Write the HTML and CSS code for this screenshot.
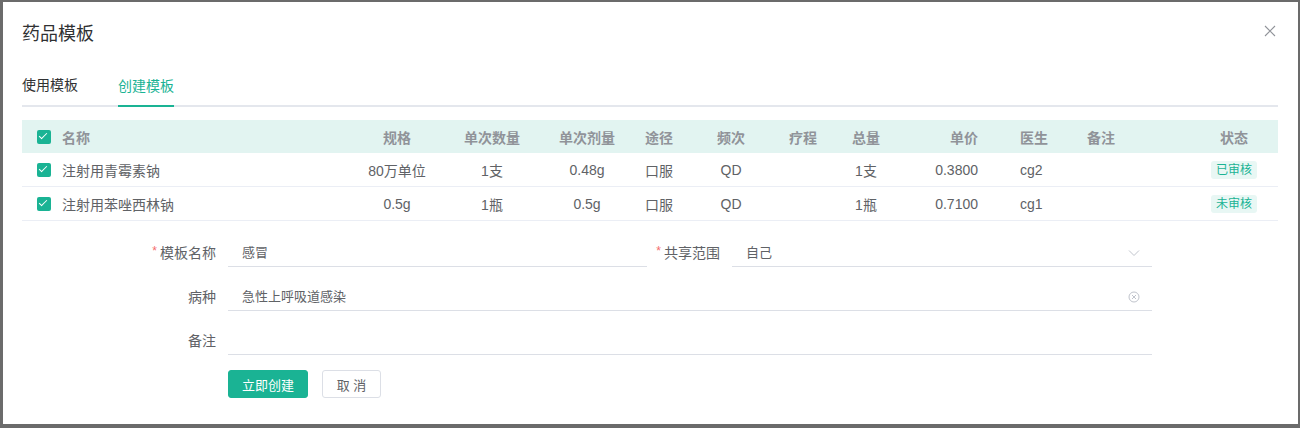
FILE: index.html
```html
<!DOCTYPE html>
<html lang="zh">
<head>
<meta charset="utf-8">
<title>药品模板</title>
<link rel="stylesheet" href="styles.css">
</head>
<body>
<div class="modal">
  <div class="modal-head">
    <span class="modal-title">药品模板</span>
    <svg class="close" width="12" height="12" viewBox="0 0 12 12"><path d="M1 1L11 11M11 1L1 11" stroke="#909399" stroke-width="1.1" fill="none"/></svg>
  </div>
  <div class="tabs">
    <div class="tab">使用模板</div>
    <div class="tab active">创建模板</div>
  </div>
  <div class="grid">
    <div class="row head">
      <div class="c-chk"><span class="chk"></span></div>
      <div class="c-left">名称</div>
      <div class="c-mid">规格</div>
      <div class="c-mid">单次数量</div>
      <div class="c-mid">单次剂量</div>
      <div class="c-mid">途径</div>
      <div class="c-mid">频次</div>
      <div class="c-mid">疗程</div>
      <div class="c-mid">总量</div>
      <div class="c-right">单价</div>
      <div class="c-doc">医生</div>
      <div class="c-doc">备注</div>
      <div class="c-mid">状态</div>
    </div>
    <div class="row">
      <div class="c-chk"><span class="chk"></span></div>
      <div class="c-left">注射用青霉素钠</div>
      <div class="c-mid">80万单位</div>
      <div class="c-mid">1支</div>
      <div class="c-mid">0.48g</div>
      <div class="c-mid">口服</div>
      <div class="c-mid">QD</div>
      <div class="c-mid"></div>
      <div class="c-mid">1支</div>
      <div class="c-right">0.3800</div>
      <div class="c-doc">cg2</div>
      <div class="c-doc"></div>
      <div class="c-mid"><span class="tag">已审核</span></div>
    </div>
    <div class="row">
      <div class="c-chk"><span class="chk"></span></div>
      <div class="c-left">注射用苯唑西林钠</div>
      <div class="c-mid">0.5g</div>
      <div class="c-mid">1瓶</div>
      <div class="c-mid">0.5g</div>
      <div class="c-mid">口服</div>
      <div class="c-mid">QD</div>
      <div class="c-mid"></div>
      <div class="c-mid">1瓶</div>
      <div class="c-right">0.7100</div>
      <div class="c-doc">cg1</div>
      <div class="c-doc"></div>
      <div class="c-mid"><span class="tag">未审核</span></div>
    </div>
  </div>
  <div class="form">
    <div class="frow">
      <label class="flabel"><span class="req">*</span>模板名称</label>
      <div class="finput half"><span class="val">感冒</span></div>
      <label class="flabel lab2"><span class="req">*</span>共享范围</label>
      <div class="finput half2"><span class="val">自己</span>
        <svg class="suffix" width="12" height="8" viewBox="0 0 12 8"><path d="M1 1.5L6 6.5L11 1.5" stroke="#c0c4cc" stroke-width="1" fill="none"/></svg>
      </div>
    </div>
    <div class="frow">
      <label class="flabel">病种</label>
      <div class="finput full"><span class="val">急性上呼吸道感染</span>
        <svg class="suffix" width="12" height="12" viewBox="0 0 12 12"><circle cx="6" cy="6" r="5" stroke="#c0c4cc" stroke-width="1" fill="none"/><path d="M4 4L8 8M8 4L4 8" stroke="#c0c4cc" stroke-width="1"/></svg>
      </div>
    </div>
    <div class="frow">
      <label class="flabel">备注</label>
      <div class="finput full"></div>
    </div>
    <div class="btns">
      <button class="btn primary">立即创建</button>
      <button class="btn">取 消</button>
    </div>
  </div>
</div>
</body>
</html>
```

FILE: styles.css
```css
html, body {
  margin: 0;
  padding: 0;
  background: #6b6b6b;
  height: 428px;
  overflow: hidden;
}
body {
  font-family: "Liberation Sans", "Noto Sans CJK SC", sans-serif;
  color: #606266;
}
.modal {
  margin: 2px 2px 0 3px;
  height: 422px;
  background: #fff;
  box-sizing: border-box;
  padding: 20px 20px 0 19px;
}
.modal-head {
  display: flex;
  align-items: center;
  justify-content: space-between;
  height: 24px;
}
.modal-title {
  font-size: 18px;
  color: #303133;
  line-height: 24px;
}
.close {
  margin-right: 2px;
  margin-top: -6px;
}
.tabs {
  margin-top: 19px;
  display: flex;
  gap: 40px;
  height: 40px;
  border-bottom: 2px solid #e4e7ed;
}
.tab {
  font-size: 14px;
  line-height: 40px;
  color: #303133;
  height: 40px;
  box-sizing: border-box;
}
.tab.active {
  color: #1ab394;
  border-bottom: 2px solid #1ab394;
  height: 42px;
  line-height: 42px;
  padding-bottom: 4px;
}
.grid {
  margin-top: 13px;
  font-size: 14px;
}
.row {
  display: grid;
  grid-template-columns: 40px 288px 94px 96px 94px 50px 94px 50px 76px 106px 67px 113px 88px;
  height: 34px;
  align-items: center;
  border-bottom: 1px solid #ebeef5;
  box-sizing: border-box;
}
.row.head {
  height: 33px;
  background: #e2f4f1;
  color: #909399;
  font-weight: bold;
  border-bottom: none;
}
.c-chk {
  padding-left: 15px;
  display: flex;
  align-items: center;
}
.chk {
  width: 14px;
  height: 14px;
  border-radius: 2px;
  background: #1ab394;
  position: relative;
  box-sizing: border-box;
}
.chk::after {
  content: "";
  position: absolute;
  left: 4px;
  top: 1px;
  width: 3px;
  height: 7px;
  border: solid #fff;
  border-width: 0 1px 1px 0;
  transform: rotate(45deg);
}
.c-left { text-align: left; }
.c-mid { text-align: center; }
.c-right { text-align: right; padding-right: 32px; }
.c-doc { padding-left: 10px; }
.tag {
  display: inline-block;
  font-size: 12px;
  line-height: 18px;
  height: 18px;
  padding: 0 5px;
  background: #e8f7f4;
  color: #1ab394;
  border-radius: 3px;
  font-weight: normal;
}
.form {
  margin-top: 10px;
}
.frow {
  display: flex;
  align-items: flex-end;
  height: 36px;
  margin-bottom: 8px;
}
.flabel {
  width: 194px;
  padding: 8px 12px 0 0;
  text-align: right;
  font-size: 14px;
  line-height: 28px;
  height: 36px;
  box-sizing: content-box;
  height: 28px;
  color: #606266;
}
.flabel.lab2 {
  width: 73px;
}
.req {
  color: #f56c6c;
  font-size: 12px;
  margin-right: 3px;
  position: relative;
  top: -3px;
}
.finput {
  height: 36px;
  border-bottom: 1px solid #dcdfe6;
  box-sizing: border-box;
  display: flex;
  align-items: center;
  justify-content: space-between;
  padding: 8px 12px 0 14px;
  font-size: 13px;
  color: #606266;
}
.finput.half { width: 419px; }
.finput.half2 { width: 420px; }
.finput.full { width: 924px; }
.val { line-height: 20px; }
.suffix { flex: none; margin-left: auto; }
.btns {
  margin-top: 15px;
  padding-left: 206px;
  display: flex;
  gap: 14px;
}
.btn {
  height: 28px;
  font-size: 13px;
  font-family: inherit;
  border: 1px solid #dcdfe6;
  border-radius: 3px;
  background: #fff;
  color: #606266;
  width: 59px;
  box-sizing: border-box;
  padding: 0;
}
.btn.primary {
  background: #1ab394;
  border-color: #1ab394;
  color: #fff;
  width: 80px;
}
```
